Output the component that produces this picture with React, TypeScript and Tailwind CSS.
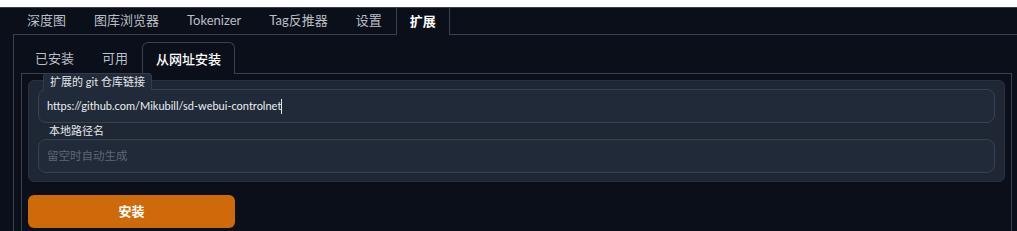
const topTabs = ['深度图', '图库浏览器', 'Tokenizer', 'Tag反推器', '设置', '扩展'];
const subTabs = ['已安装', '可用', '从网址安装'];

export default function App() {
  return (
    <div
      className="w-[1017px] h-[231px] overflow-hidden bg-[#0b0f19] text-[#b9bec7]"
      style={{ fontFamily: 'Lato, "Noto Sans CJK SC", sans-serif' }}
    >
      <div className="h-[7px] bg-white" />

      <div className="pl-[13px] border-t border-[#3a3f4b]">
        {/* Top tabs */}
        <div className="flex h-[27px] border-b border-[#374151]">
          {topTabs.map(t =>
            t === '扩展' ? (
              <div
                key={t}
                className="px-[13px] -mb-px h-[27px] flex items-center bg-[#0b0f19] border-x border-[#374151] text-white font-bold text-[13px]"
              >
                {t}
              </div>
            ) : (
              <div key={t} className="px-[14px] h-[26px] flex items-center text-[13px]">
                {t}
              </div>
            )
          )}
        </div>

        {/* Outer panel */}
        <div className="border-l border-[#374151] pl-[7px] pt-[7px] w-[999px]">
          <div className="flex h-[32px] border-b border-[#374151]">
            {subTabs.map(t =>
              t === '从网址安装' ? (
                <div
                  key={t}
                  className="px-[13px] -mb-px h-[32px] pt-[2px] flex items-center bg-[#0b0f19] border border-b-0 border-[#374151] rounded-t-[6px] text-white font-medium text-[13px]"
                >
                  {t}
                </div>
              ) : (
                <div key={t} className="px-[14px] h-[31px] pt-[3px] flex items-center text-[13px]">
                  {t}
                </div>
              )
            )}
          </div>

          <div className="border-x border-[#374151] px-[6px] pt-[6px] h-[160px]">
            <div className="relative bg-[#1f2735] border border-[#283142] rounded-[6px] px-[9px] pt-[8px] pb-[8px]">
              <span className="absolute left-[14px] -top-[8px] h-[17px] px-[6px] flex items-center bg-[#222b39] border border-b-0 border-[#323c4d] rounded-t-[4px] text-[11px] text-[#e5e7eb]">
                扩展的 git 仓库链接
              </span>
              <div className="h-[34px] flex items-center px-[8px] bg-[#212a38] border border-[#364152] rounded-[8px] text-[11px] text-[#eceef1]">
                https://github.com/Mikubill/sd-webui-controlnet
                <span className="inline-block w-px h-[15px] bg-[#e5e7eb]" />
              </div>
              <div className="h-[16px] pl-[11px] flex items-center text-[11px] text-[#e5e7eb]">本地路径名</div>
              <div className="h-[34px] flex items-center px-[8px] bg-[#212a38] border border-[#364152] rounded-[8px] text-[11.5px] text-[#5f6775]">
                留空时自动生成
              </div>
            </div>

            <button className="mt-[13px] w-[207px] h-[33px] rounded-[6px] bg-[#cf6a0b] text-white font-bold text-[13px]">
              安装
            </button>
          </div>
        </div>
      </div>
    </div>
  );
}
